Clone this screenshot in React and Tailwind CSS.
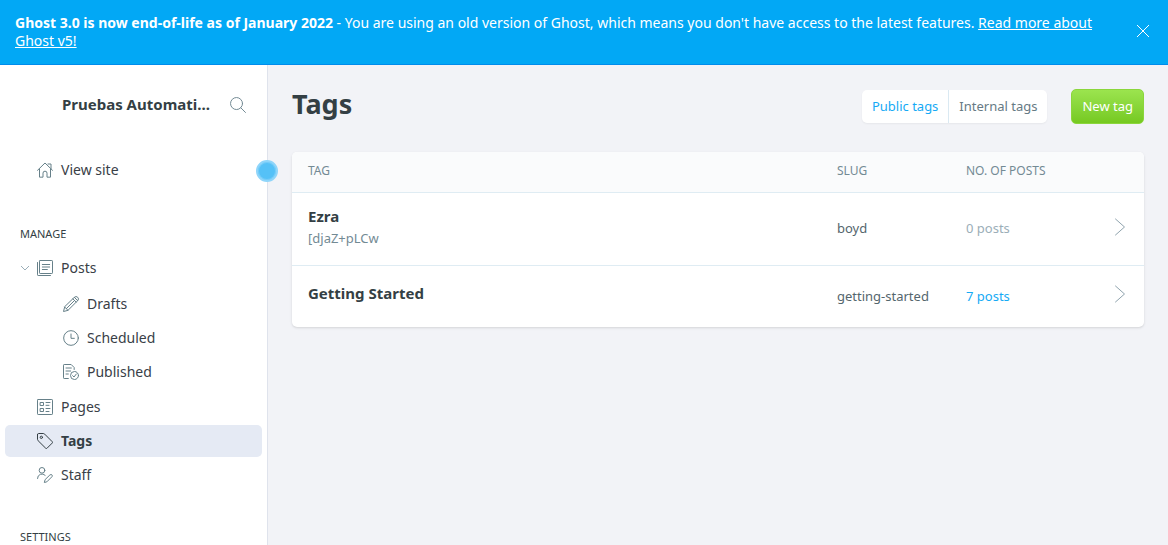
import React from "react";

function Icon({ children, className = "text-[#738a94]", size = 16, viewBox = "0 0 24 24" }) {
  return (
    <svg
      width={size}
      height={size}
      viewBox={viewBox}
      fill="none"
      stroke="currentColor"
      strokeWidth="1.5"
      strokeLinecap="round"
      strokeLinejoin="round"
      className={"shrink-0 " + className}
      aria-hidden="true"
    >
      {children}
    </svg>
  );
}

const icons = {
  house: (
    <>
      <path d="M.75 12.5 12 1.5l11.25 11" />
      <path d="M16.5 3h4.5v7" />
      <path d="M3.75 11v11.75H9v-6a3 3 0 0 1 6 0v6h5.25V11" />
    </>
  ),
  posts: (
    <>
      <rect x="3.75" y=".75" width="19.5" height="19.5" rx="1" />
      <path d="M20.25 23.25H1.75a1 1 0 0 1-1-1V3.75M8 6.75h11M8 10.5h11M8 14.25h7.5" />
    </>
  ),
  pencil: (
    <>
      <path d="m2.5 16.5-1.75 6.75L7.5 21.5 22.1 6.9a3.5 3.5 0 0 0-5-5z" />
      <path d="m2.5 16.5 5 5M14.8 4.2l5 5M17 2l5 5M5 19 17.3 6.7" />
    </>
  ),
  clock: (
    <>
      <circle cx="12" cy="12" r="11" />
      <path d="M12 6v6.5h5" />
    </>
  ),
  published: (
    <>
      <path d="M8 21.75H1.75a1 1 0 0 1-1-1v-19a1 1 0 0 1 1-1h10.5l4.5 4.5v3M4.5 6h8M4.5 10.5h7M4.5 15H8" />
      <circle cx="17.25" cy="17.25" r="6" />
      <path d="m14.5 17.5 2 2 3.5-4.5" />
    </>
  ),
  pages: (
    <>
      <rect x=".75" y=".75" width="22.5" height="22.5" rx="1" />
      <path d="M5.25 5.25h4.5v4.5h-4.5zM5.25 14.25h4.5v4.5h-4.5zM13.5 5.25h6M13.5 9.5h4.5M13.5 14.25h6M13.5 18.75h4.5" />
    </>
  ),
  tag: (
    <>
      <path d="M.75 2.25v7.2a3 3 0 0 0 .9 2.1L13 22.8a1.5 1.5 0 0 0 2.1 0l7.7-7.7a1.5 1.5 0 0 0 0-2.1L11.5 1.65a3 3 0 0 0-2.1-.9H2.25a1.5 1.5 0 0 0-1.5 1.5z" />
      <circle cx="6.5" cy="6.5" r="1.75" />
    </>
  ),
  staff: (
    <>
      <circle cx="7.5" cy="5" r="4.25" />
      <path d="M.75 17.25a6.75 6.75 0 0 1 11.5-4.8" />
      <path d="m12 19.5-1 3.75 3.75-1 7.8-7.8a2 2 0 0 0-2.8-2.8z" />
    </>
  ),
};

function NavItem({ icon, label, active, sub }) {
  return (
    <li>
      <a
        href="#"
        className={
          "flex h-8 items-center gap-2 rounded-[5px] " +
          (sub ? "pl-[58px] " : "pl-8 ") +
          (active ? "bg-[#e5eaf4] font-bold text-[#343f44]" : "text-[#394047]")
        }
      >
        <Icon className={active ? "text-[#343f44]" : "text-[#668089]"}>{icons[icon]}</Icon>
        {label}
      </a>
    </li>
  );
}

const tags = [
  { name: "Ezra", description: "[djaZ+pLCw", slug: "boyd", count: 0 },
  { name: "Getting Started", slug: "getting-started", count: 7 },
];

export default function App() {
  return (
    <div className="flex h-screen flex-col overflow-hidden bg-[#f2f3f7] font-['Noto_Sans',sans-serif] text-sm text-[#343f44]">
      <header className="flex items-center justify-between border-b border-[#008cec] bg-[#02a8f5] pt-3.5 pr-[18px] pb-3.5 pl-[15px] leading-[18px] text-white">
        <p className="mr-8">
          <b>Ghost 3.0 is now end-of-life as of January 2022</b> - You are using an old version of
          Ghost, which means you don't have access to the latest features.{" "}
          <a href="#" className="underline">Read more about Ghost v5!</a>
        </p>
        <button type="button" aria-label="Close" className="pb-0.5">
          <svg width="14" height="14" viewBox="0 0 14 14" fill="none" stroke="currentColor">
            <path d="m1 1 12 12M13 1 1 13" />
          </svg>
        </button>
      </header>

      <div className="flex min-h-0 flex-1">
        <aside className="relative w-[268px] shrink-0 border-r border-[#dfe3ec] bg-white">
          <div className="flex h-20 items-center justify-between pr-[21px] pl-[62px]">
            <h3 className="text-[15px] font-bold">Pruebas Automati...</h3>
            <button type="button" aria-label="Search">
              <Icon size={16}>
                <circle cx="9.8" cy="9.8" r="9" />
                <path d="m16.2 16.2 7 7" />
              </Icon>
            </button>
          </div>
          <nav className="px-[5px] pt-[9px]">
            <ul>
              <NavItem icon="house" label="View site" />
            </ul>
            <h4 className="mt-10 mb-2.5 pl-[15px] text-[11px] leading-4 uppercase">Manage</h4>
            <ul className="flex flex-col gap-0.5">
              <li className="flex items-center pl-[15px]">
                <button type="button" aria-label="Collapse posts" className="mr-[7px] text-[#9baeb8]">
                  <svg width="10" height="10" viewBox="0 0 10 10" fill="none" stroke="currentColor">
                    <path d="m1 3 4 4 4-4" />
                  </svg>
                </button>
                <a href="#" className="flex h-8 items-center gap-2 text-[#394047]">
                  <Icon className="text-[#668089]">{icons.posts}</Icon>
                  Posts
                </a>
              </li>
              <li>
                <ul className="flex flex-col gap-0.5 pt-0.5 pb-px">
                  <NavItem sub icon="pencil" label="Drafts" />
                  <NavItem sub icon="clock" label="Scheduled" />
                  <NavItem sub icon="published" label="Published" />
                </ul>
              </li>
              <NavItem icon="pages" label="Pages" />
              <NavItem icon="tag" label="Tags" active />
              <NavItem icon="staff" label="Staff" />
            </ul>
            <h4 className="mt-[38px] mb-2.5 pl-[15px] text-[11px] leading-4 uppercase">Settings</h4>
          </nav>
          <span className="absolute top-[95px] -right-[11px] size-[22px] rounded-full border-2 border-[#8fd5fa] bg-[#55c1f7] ring-1 ring-inset ring-[#76ccf8]" />
        </aside>

        <main className="min-w-0 flex-1 px-6">
          <div className="flex h-[87px] items-center justify-between pb-1">
            <h1 className="pb-1.5 text-[27px] leading-9 font-bold">Tags</h1>
            <div className="flex items-center gap-6 text-[13px]">
              <div className="flex h-[33px] rounded-[5px] bg-white shadow-xs">
                <button type="button" className="border-r border-[#dae9f2] px-2.5 text-[#15aaf5]">Public tags</button>
                <button type="button" className="px-2.5 text-[#667a84]">Internal tags</button>
              </div>
              <button type="button" className="h-[35px] rounded-[5px] border border-[#8bd63c] bg-linear-to-b from-[#9be44e] to-[#76c920] px-2.5 text-white">
                New tag
              </button>
            </div>
          </div>

          <div className="overflow-hidden rounded-[5px] bg-white shadow-sm">
            <table className="w-full table-fixed text-left text-[13px]">
              <thead>
                <tr className="h-10 border-b border-[#dfecf3] bg-[#fafbfc] text-xs text-[#738a94] uppercase">
                  <th className="pb-0.5 pl-4 font-normal">Tag</th>
                  <th className="w-[129px] pb-0.5 font-normal">Slug</th>
                  <th className="w-[130px] pb-0.5 font-normal">No. of posts</th>
                  <th className="w-12" aria-label="Open" />
                </tr>
              </thead>
              <tbody>
                {tags.map((tag) => (
                  <tr key={tag.slug} className="border-b border-[#dfecf3] last:border-0">
                    <td className="pt-[11px] pb-[17px] pl-4">
                      <h3 className="text-[15px] leading-6 font-bold">{tag.name}</h3>
                      {tag.description && (
                        <p className="leading-5 text-[#738a94]">{tag.description}</p>
                      )}
                    </td>
                    <td className="h-[62px] text-[#54666d]">{tag.slug}</td>
                    <td className={tag.count ? "text-[#15aaf5]" : "text-[#9baeb8]"}>{tag.count} posts</td>
                    <td className="pr-4 pb-1">
                      <a href="#" aria-label={"Open " + tag.name} className="flex justify-end text-[#8fa3ad]">
                        <svg width="16" height="18" viewBox="0 0 16 18" fill="none" stroke="currentColor" strokeLinecap="round" strokeLinejoin="round">
                          <path d="m3.5 1 9 8-9 8" />
                        </svg>
                      </a>
                    </td>
                  </tr>
                ))}
              </tbody>
            </table>
          </div>
        </main>
      </div>
    </div>
  );
}
